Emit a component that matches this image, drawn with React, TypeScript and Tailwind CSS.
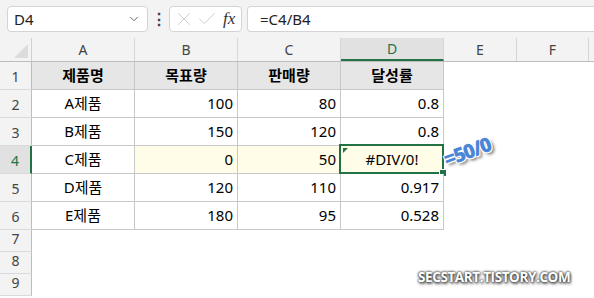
import { ChevronDown, X, Check } from 'lucide-react'

const cols = ['A', 'B', 'C', 'D', 'E', 'F']
const colW = ['w-[103px]', 'w-[103px]', 'w-[103px]', 'w-[103px]', 'w-[73px]', 'w-[72px]']

const rows = [
  ['제품명', '목표량', '판매량', '달성률'],
  ['A제품', '100', '80', '0.8'],
  ['B제품', '150', '120', '0.8'],
  ['C제품', '0', '50', '#DIV/0!'],
  ['D제품', '120', '110', '0.917'],
  ['E제품', '180', '95', '0.528'],
]

function Cell({ r, c, v }: { r: number; c: number; v: string }) {
  const header = r === 0
  const yellow = r === 3 && c > 0
  const align = header || c === 0 || (r === 3 && c === 3) ? 'justify-center' : 'justify-end pr-[4px]'
  return (
    <div
      className={`relative ${colW[c]} h-full flex items-center ${align} border-r border-b border-[#c8c8c8] ${
        header ? 'bg-[#e7e6e6] font-bold' : yellow ? 'bg-[#fffde8]' : 'bg-white'
      }`}
    >
      {v}
      {r === 3 && c === 3 && (
        <>
          <div className="absolute left-[-2px] top-[-2px] right-[-1px] bottom-[-1px] border-2 border-[#217346]" />
          <div className="absolute left-[2px] top-[2px] w-0 h-0 border-t-[5px] border-t-[#217346] border-r-[5px] border-r-transparent" />
          <div className="absolute right-[-4px] bottom-[-4px] w-[6px] h-[6px] bg-[#217346] border border-white box-content" />
        </>
      )}
    </div>
  )
}

export default function App() {
  return (
    <div
      className="relative w-[594px] h-[298px] overflow-hidden bg-white text-[15px] text-black"
      style={{ fontFamily: '"Noto Sans", "Noto Sans CJK KR", sans-serif' }}
    >
      {/* Formula bar */}
      <div className="h-[38px] bg-[#f3f3f3] flex items-start pt-[6px] pl-[7px]">
        <div className="w-[141px] h-[26px] bg-white border border-[#d4d4d4] rounded-[4px] flex items-center pl-[6px] pr-[6px]">
          <span className="flex-1 text-[15px] text-[#222]">D4</span>
          <ChevronDown className="w-[14px] h-[14px] text-[#555]" strokeWidth={1.5} />
        </div>
        <div className="w-[21px] h-[26px] flex items-center justify-center text-[#444] text-[16px] font-bold">⋮</div>
        <div className="w-[73px] h-[26px] bg-white border border-[#d4d4d4] rounded-[4px] flex items-center pl-[3px] gap-[1px]">
          <X className="w-[22px] h-[22px] text-[#c4c4c4]" strokeWidth={0.9} />
          <Check className="w-[22px] h-[22px] text-[#c4c4c4]" strokeWidth={0.9} />
          <span className="ml-[4px] italic text-[#333] text-[17px]" style={{ fontFamily: '"Liberation Serif", serif' }}>
            fx
          </span>
        </div>
        <div className="ml-[5px] flex-1 h-[26px] bg-white border border-[#d4d4d4] border-r-0 rounded-l-[4px] flex items-center pl-[12px] text-[15px] text-[#222]">
          =C4/B4
        </div>
      </div>

      {/* Column headers */}
      <div className="flex h-[24px] bg-[#f3f3f3] border-b border-[#bdbdbd] text-[#444] text-[14px]">
        <div className="relative w-[32px] h-full border-r border-[#d0d0d0]">
          <div className="absolute right-[3px] bottom-[3px] w-0 h-0 border-l-[14px] border-l-transparent border-b-[14px] border-b-[#dcdcdc]" />
        </div>
        {cols.map((c, i) => (
          <div
            key={c}
            className={`${colW[i]} h-full flex items-center justify-center border-r border-[#d6d6d6] ${
              c === 'D' ? 'bg-[#e1e1e1] text-[#217346] border-b-2 border-b-[#217346]' : ''
            }`}
          >
            {c}
          </div>
        ))}
      </div>

      {/* Rows */}
      {Array.from({ length: 9 }).map((_, r) => (
        <div key={r} className={`flex ${r < 6 ? 'h-[28px]' : 'h-[22px]'}`}>
          <div
            className={`w-[32px] h-full flex items-end pb-[2px] justify-center text-[14px] border-b border-[#dadada] border-r ${
              r === 3
                ? 'bg-[#e1e1e1] text-[#217346] border-r-2 border-r-[#217346]'
                : 'bg-[#f3f3f3] text-[#444] border-r-[#bdbdbd]'
            }`}
          >
            {r + 1}
          </div>
          {r < 6 && rows[r].map((v, c) => <Cell key={c} r={r} c={c} v={v} />)}
        </div>
      ))}

      {/* Annotation */}
      <div
        className="absolute left-[443px] top-[137px] rotate-[-20deg] text-[20px] font-extrabold text-[#4a86d8] tracking-[-1.5px]"
        style={{
          fontFamily: '"Open Sans", sans-serif',
          textShadow:
            '-1px -1px 0 #fff, 1px -1px 0 #fff, -1px 1px 0 #fff, 1px 1px 0 #fff, 2px 3px 3px rgba(0,0,0,0.5)',
        }}
      >
        =50/0
      </div>

      {/* Watermark */}
      <div
        className="absolute left-[418px] top-[267px] text-[13.5px] font-bold text-white tracking-[-0.4px]"
        style={{
          fontFamily: '"Open Sans", sans-serif',
          textShadow: '0 0 2px #333, 0 0 3px #333, 1px 2px 3px rgba(0,0,0,0.6)',
        }}
      >
        SECSTART.TISTORY.COM
      </div>
    </div>
  )
}
